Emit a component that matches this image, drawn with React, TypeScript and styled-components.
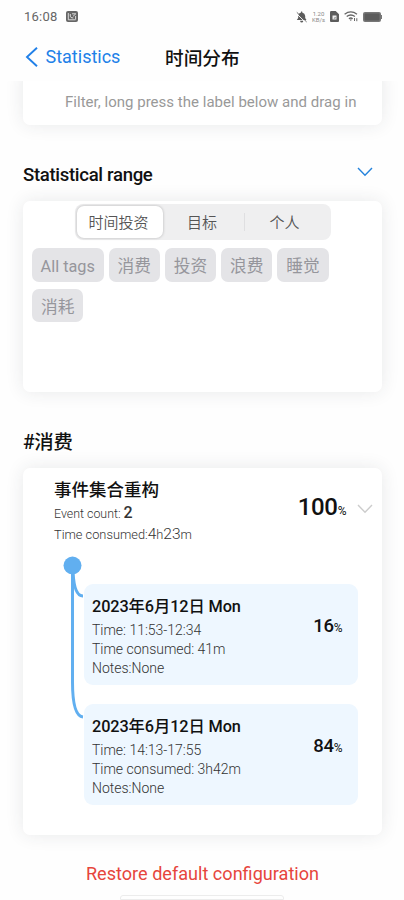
import React from "react";
import styled, { createGlobalStyle } from "styled-components";

const GlobalStyle = createGlobalStyle`
  * { box-sizing: border-box; }
  body {
    margin: 0;
    background: #fefefe;
    color: #111;
    font-family: Roboto, "Noto Sans CJK SC", sans-serif;
  }
`;

const Screen = styled.div`
  width: 404px;
  height: 900px;
  overflow: hidden;
  display: flex;
  flex-direction: column;
  background: #fefefe;
`;

const StatusBar = styled.header`
  height: 33px;
  padding: 0 22px 0 24px;
  display: flex;
  align-items: center;
  justify-content: space-between;
  color: #666;
`;

const StatusGroup = styled.div<{ $gap: number }>`
  display: flex;
  align-items: center;
  gap: ${(p) => p.$gap}px;
`;

const Clock = styled.span`
  font-size: 13px;
  line-height: 16px;
  letter-spacing: 0.25px;
`;

const NetSpeed = styled.span`
  display: flex;
  flex-direction: column;
  width: 13px;
  font-size: 6px;
  line-height: 6px;
  color: #888;
  text-align: center;
`;

const NavBar = styled.nav`
  height: 48px;
  flex: none;
  display: grid;
  grid-template-columns: 140px 1fr 140px;
  align-items: center;
  padding-left: 25px;
`;

const BackLink = styled.a`
  display: flex;
  align-items: center;
  gap: 7.5px;
  color: #2180e8;
  font-size: 18px;
  line-height: 24px;
`;

const NavTitle = styled.h1`
  margin: 3px 0 0;
  font-size: 18.7px;
  line-height: 24px;
  font-weight: 500;
  color: #111;
  white-space: nowrap;
`;

const Content = styled.main`
  flex: 1;
  overflow: hidden;
  padding: 0 22px 0 23px;
`;

const Card = styled.section<{ $height: number }>`
  height: ${(p) => p.$height}px;
  background: #fff;
  border-radius: 7px;
  box-shadow: 0 0 18px rgba(40, 45, 55, 0.1);
`;

const FilterCard = styled(Card)`
  margin-top: -16px;
  padding: 27px 0 0 42px;
  font-size: 15px;
  line-height: 20px;
  letter-spacing: 0.02px;
  color: #999;
  white-space: nowrap;
`;

const SectionHead = styled.div<{ $top: number; $height: number }>`
  display: flex;
  justify-content: space-between;
  padding-top: ${(p) => p.$top}px;
  padding-right: 9px;
  height: ${(p) => p.$height}px;
`;

const SectionTitle = styled.h2<{ $size: number }>`
  margin: 0;
  font-size: ${(p) => p.$size}px;
  line-height: 24px;
  font-weight: 500;
  letter-spacing: -0.33px;
`;

const ToggleIcon = styled.span`
  display: flex;
  height: 10px;
  margin-top: 4px;
`;

const RangeCard = styled(Card)`
  padding: 3px 9px;
`;

const Segments = styled.div`
  width: 256px;
  height: 36px;
  margin-left: 43px;
  padding: 2px;
  display: grid;
  grid-template-columns: 86px 81px 1px 82px;
  align-items: center;
  border-radius: 8px;
  background: #efeff0;
`;

const Segment = styled.button<{ $active?: boolean }>`
  height: 32px;
  padding: 3px 3px 0 0;
  border: 0;
  border-radius: 7px;
  background: ${(p) => (p.$active ? "#fff" : "transparent")};
  box-shadow: ${(p) => (p.$active ? "0 0 3px rgba(0,0,0,.25)" : "none")};
  color: #555;
  font: 350 15px/29px Roboto, "Noto Sans CJK SC", sans-serif;
`;

const Divider = styled.span`
  height: 18px;
  background: #dfdfe1;
`;

const Tags = styled.div`
  display: flex;
  flex-wrap: wrap;
  gap: 7px 5px;
  width: 310px;
  margin-top: 8px;
`;

const Tag = styled.span<{ $wide?: boolean }>`
  width: ${(p) => (p.$wide ? 71.5 : 51.3)}px;
  height: 33.5px;
  border-radius: 7px;
  background: #e4e4e7;
  color: #96969c;
  font-size: ${(p) => (p.$wide ? 16.3 : 16.7)}px;
  line-height: 38px;
  font-weight: 400;
  text-align: center;
  white-space: nowrap;
`;

const EventCard = styled(Card)`
  display: flex;
  flex-direction: column;
`;

const EventHeader = styled.div`
  display: flex;
  justify-content: space-between;
  height: 84px;
  padding: 10px 9px 0 31px;
`;

const EventTitle = styled.h3`
  margin: 0 0 1px;
  font-size: 17.5px;
  line-height: 24px;
  font-weight: 500;
`;

const EventMeta = styled.p<{ $size: number }>`
  margin: 0;
  font-size: ${(p) => p.$size}px;
  line-height: 21px;
  font-weight: 300;
  color: #333;
  white-space: nowrap;
`;

const Figure = styled.span<{ $size: number; $bold?: boolean }>`
  font-size: ${(p) => p.$size}px;
  font-weight: ${(p) => (p.$bold ? 500 : 350)};
  line-height: 18px;
`;

const Share = styled.div<{ $size: number }>`
  font-size: ${(p) => p.$size}px;
  line-height: 28px;
  font-weight: 500;
  letter-spacing: -0.3px;
  color: #111;
  white-space: nowrap;
`;

const Percent = styled.span`
  font-size: 12px;
  font-weight: 400;
  letter-spacing: -0.5px;
`;

const TotalShare = styled.div`
  display: flex;
  align-items: center;
  gap: 11px;
  height: 28px;
  margin-top: 17px;
`;

const Timeline = styled.div`
  display: grid;
  grid-template-columns: 61px 274px;
`;

const Entries = styled.div`
  display: flex;
  flex-direction: column;
  gap: 19px;
  padding-top: 32px;
`;

const Entry = styled.article`
  height: 101px;
  padding: 10px 16px 0 8px;
  display: flex;
  justify-content: space-between;
  border-radius: 9px;
  background: #eef7ff;
`;

const EntryDate = styled.h4`
  margin: 0 0 2px;
  font-size: 16.3px;
  line-height: 25px;
  font-weight: 500;
  letter-spacing: -0.1px;
  white-space: nowrap;
`;

const EntryLine = styled.p`
  margin: 0;
  font-size: 14px;
  line-height: 19px;
  font-weight: 300;
  letter-spacing: -0.02px;
  color: #333;
  white-space: nowrap;
`;

const EntryShare = styled(Share)`
  margin-top: 18px;
`;

const Restore = styled.button`
  display: block;
  margin: 27px auto 0;
  padding: 0;
  border: 0;
  background: none;
  color: #e6453c;
  font: 400 18.1px/24px Roboto, sans-serif;
`;

const HomeIndicator = styled.footer`
  width: 164px;
  height: 5px;
  flex: none;
  margin: 0 auto;
  border-radius: 3px 3px 0 0;
  border: 1px solid #ececec;
`;

const Chevron = ({ color }: { color: string }) => (
  <svg width="16" height="10" viewBox="0 0 16 10" fill="none" stroke={color} strokeWidth="1.4">
    <path d="M1 1 L8 8.3 L15 1" />
  </svg>
);

const AppBadge = () => (
  <svg width="12" height="11" viewBox="0 0 12 11">
    <rect width="12" height="11" rx="2" fill="#666" />
    <path d="M2.3 2v6.8h7.2M4.3 3v2.2q0 1.8 3 1.8M6 2.8h3.8M7 5.3 9.7 3M9.6 5v3.5" stroke="#e8e8e8" strokeWidth=".9" fill="none" />
  </svg>
);

const MutedBell = () => (
  <svg width="11" height="12" viewBox="0 0 11 12">
    <path d="M.8 9 2.2 7V4.5Q2.7 2 5 1.4V.4h1.2v1Q9 2.2 9.2 5v2l1.3 2ZM4 9.7h3.4Q7 11.6 5.7 11.6 4.4 11.6 4 9.7Z" fill="#5c5c5c" />
    <path d="m.2 2.2 9.6 9.4" stroke="#fefefe" strokeWidth="1" />
    <path d="m.8 1.3 9.8 9.6" stroke="#5c5c5c" strokeWidth=".9" />
  </svg>
);

const SimCard = () => (
  <svg width="9" height="11" viewBox="0 0 9 11">
    <path d="M1.2 0h4.5L9 3.2V10q0 1-1 1H1q-1 0-1-1V1.2Q0 0 1.2 0Z" fill="#5c5c5c" />
    <path d="M2.5 4.5h4v4h-4Z" fill="#eee" />
    <path d="m3.5 7.5 2-1.8v1.8Z" fill="#666" />
  </svg>
);

const Wifi = () => (
  <svg width="14" height="11" viewBox="0 0 14 11" fill="none" stroke="#666" strokeWidth="1.3">
    <path d="M.6 3.2Q6.8-1.4 13 3.2M2.7 5.5q4.1-3 8.2 0M4.9 7.7q1.9-1.4 3.8 0" />
    <path d="m5.6 8.6 1.2 1.4L8 8.6Z" fill="#666" stroke="none" />
    <path d="M10.5 7v3M12.8 7.2v3" strokeWidth="1" />
  </svg>
);

const Battery = () => (
  <svg width="19" height="10" viewBox="0 0 19 10">
    <rect width="18" height="10" rx="2" fill="#777" />
    <rect x="1.5" y="1.5" width="15" height="7" rx="1" fill="#5c5c5c" />
    <rect x="18" y="3" width="1" height="4" fill="#777" />
  </svg>
);

const Branches = () => (
  <svg width="61" height="172" viewBox="0 0 61 172" fill="none" stroke="#61aff0" strokeWidth="3">
    <path d="M49.5 14V130Q49.5 164 60 165" />
    <path d="M50 14Q50 44 60 44" />
    <circle cx="49.5" cy="13.5" r="9" fill="#61aff0" stroke="none" />
  </svg>
);

const tags = ["All tags", "消费", "投资", "浪费", "睡觉", "消耗"];

const entries = [
  { time: "11:53-12:34", consumed: "41m", share: 16 },
  { time: "14:13-17:55", consumed: "3h42m", share: 84 },
];

export default function App() {
  return (
    <Screen>
      <GlobalStyle />
      <StatusBar>
        <StatusGroup $gap={8}>
          <Clock>16:08</Clock>
          <AppBadge />
        </StatusGroup>
        <StatusGroup $gap={5}>
          <MutedBell />
          <NetSpeed>
            <span>1.20</span>
            <span>KB/s</span>
          </NetSpeed>
          <SimCard />
          <Wifi />
          <Battery />
        </StatusGroup>
      </StatusBar>
      <NavBar>
        <BackLink>
          <svg width="13" height="20" viewBox="0 0 13 20" fill="none" stroke="#2180e8" strokeWidth="1.9">
            <path d="M12 .8 2 10l10 9.2" />
          </svg>
          Statistics
        </BackLink>
        <NavTitle>时间分布</NavTitle>
      </NavBar>
      <Content>
        <FilterCard $height={60}>Filter, long press the label below and drag in</FilterCard>
        <SectionHead $top={38} $height={76}>
          <SectionTitle $size={18.6}>Statistical range</SectionTitle>
          <ToggleIcon>
            <Chevron color="#2583dc" />
          </ToggleIcon>
        </SectionHead>
        <RangeCard $height={191}>
          <Segments>
            <Segment $active>时间投资</Segment>
            <Segment>目标</Segment>
            <Divider />
            <Segment>个人</Segment>
          </Segments>
          <Tags>
            {tags.map((tag, i) => (
              <Tag key={tag} $wide={i === 0}>{tag}</Tag>
            ))}
          </Tags>
        </RangeCard>
        <SectionHead $top={39} $height={76}>
          <SectionTitle $size={19.4}>#消费</SectionTitle>
        </SectionHead>
        <EventCard $height={367}>
          <EventHeader>
            <div>
              <EventTitle>事件集合重构</EventTitle>
              <EventMeta $size={12.4}>Event count: <Figure $size={16} $bold>2</Figure></EventMeta>
              <EventMeta $size={12.8}>
                Time consumed:<Figure $size={15.5}>4</Figure>h<Figure $size={15.5}>23</Figure>m
              </EventMeta>
            </div>
            <TotalShare>
              <Share $size={24}>100<Percent>%</Percent></Share>
              <Chevron color="#ccc" />
            </TotalShare>
          </EventHeader>
          <Timeline>
            <Branches />
            <Entries>
              {entries.map((entry) => (
                <Entry key={entry.time}>
                  <div>
                    <EntryDate>2023年6月12日 Mon</EntryDate>
                    <EntryLine>Time: {entry.time}</EntryLine>
                    <EntryLine>Time consumed: {entry.consumed}</EntryLine>
                    <EntryLine>Notes:None</EntryLine>
                  </div>
                  <EntryShare $size={18.5}>{entry.share}<Percent>%</Percent></EntryShare>
                </Entry>
              ))}
            </Entries>
          </Timeline>
        </EventCard>
        <Restore>Restore default configuration</Restore>
      </Content>
      <HomeIndicator />
    </Screen>
  );
}
